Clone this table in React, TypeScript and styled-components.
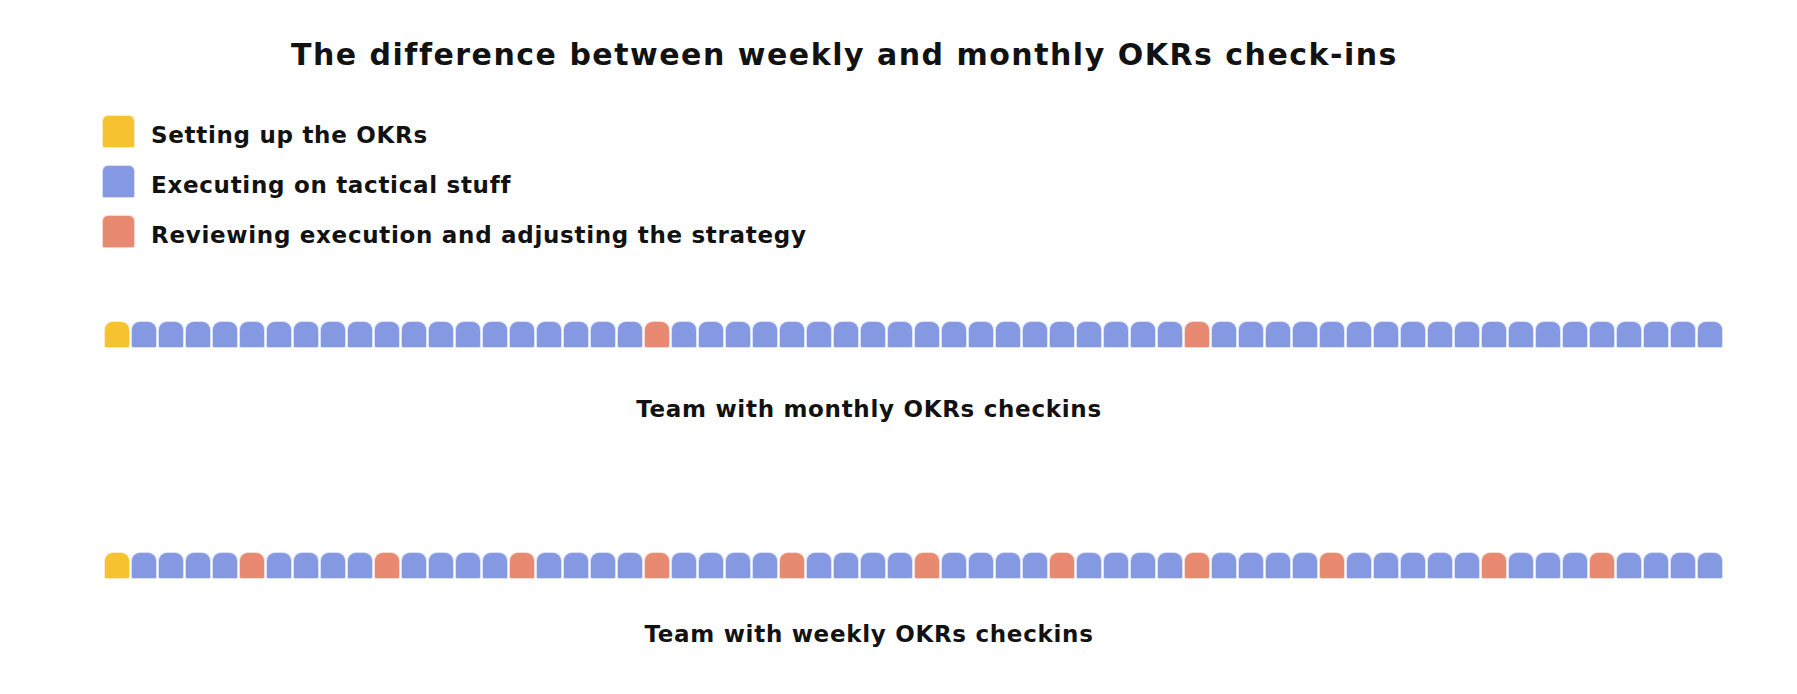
import React from "react";
import styled, { createGlobalStyle } from "styled-components";

const Global = createGlobalStyle`
  html, body { margin: 0; padding: 0; background: #ffffff; }
  body { font-family: "DejaVu Sans", "Liberation Sans", sans-serif; color: #121212; }
`;

type Kind = "setup" | "exec" | "review";

const COLORS: Record<Kind, string> = {
  setup: "#f6c230",
  exec: "#8499e1",
  review: "#e88a71",
};

const Page = styled.div`
  display: flex;
  flex-direction: column;
  align-items: flex-start;
  padding: 37px 0 40px 103px;
  width: 1797px;
  box-sizing: border-box;
`;

const Title = styled.h1`
  margin: 0 0 0 188px;
  font-size: 30px;
  line-height: 36px;
  font-weight: 700;
  letter-spacing: 1.5px;
  white-space: nowrap;
`;

const Legend = styled.div`
  display: flex;
  flex-direction: column;
  gap: 19px;
  margin-top: 43px;
`;

const LegendRow = styled.div`
  display: flex;
  align-items: flex-start;
  gap: 17px;
  height: 31px;
`;

const Swatch = styled.span<{ $kind: Kind }>`
  display: block;
  width: 31px;
  height: 31px;
  border-radius: 5px 5px 1px 1px;
  background: ${(p) => COLORS[p.$kind]};
  box-shadow: 0 0 0 1px ${(p) => COLORS[p.$kind]}55;
`;

const LegendLabel = styled.span`
  font-size: 23px;
  line-height: 31px;
  padding-top: 4px;
  margin-bottom: -4px;
  font-weight: 700;
  letter-spacing: 0.7px;
  white-space: nowrap;
`;

const Chart = styled.section<{ $top: number }>`
  display: flex;
  flex-direction: column;
  align-items: flex-start;
  margin-top: ${(p) => p.$top}px;
  margin-left: 2px;
`;

const Track = styled.div`
  display: flex;
  gap: 3px;
`;

const Block = styled.span<{ $kind: Kind }>`
  display: block;
  width: 24px;
  height: 25px;
  border-radius: 8px 8px 1px 1px;
  background: ${(p) => COLORS[p.$kind]};
  box-shadow: 0 0 0 1px ${(p) => COLORS[p.$kind]}50;
`;

const Caption = styled.div<{ $top: number }>`
  width: 1528px;
  text-align: center;
  margin-top: ${(p) => p.$top}px;
  font-size: 23px;
  line-height: 30px;
  font-weight: 700;
  letter-spacing: 0.7px;
  white-space: nowrap;
`;

const TOTAL = 60;

function buildRow(reviews: number[]): Kind[] {
  return Array.from({ length: TOTAL }, (_, i) =>
    i === 0 ? "setup" : reviews.includes(i) ? "review" : "exec"
  );
}

const monthly = buildRow([20, 40]);
const weekly = buildRow([5, 10, 15, 20, 25, 30, 35, 40, 45, 51, 55]);

const legend: { kind: Kind; label: string }[] = [
  { kind: "setup", label: "Setting up the OKRs" },
  { kind: "exec", label: "Executing on tactical stuff" },
  { kind: "review", label: "Reviewing execution and adjusting the strategy" },
];

export default function App() {
  return (
    <>
      <Global />
      <Page>
        <Title>The difference between weekly and monthly OKRs check-ins</Title>
        <Legend>
          {legend.map((l) => (
            <LegendRow key={l.kind}>
              <Swatch $kind={l.kind} />
              <LegendLabel>{l.label}</LegendLabel>
            </LegendRow>
          ))}
        </Legend>
        <Chart $top={75}>
          <Track>
            {monthly.map((k, i) => (
              <Block key={i} $kind={k} />
            ))}
          </Track>
          <Caption $top={47}>Team with monthly OKRs checkins</Caption>
        </Chart>
        <Chart $top={129}>
          <Track>
            {weekly.map((k, i) => (
              <Block key={i} $kind={k} />
            ))}
          </Track>
          <Caption $top={41}>Team with weekly OKRs checkins</Caption>
        </Chart>
      </Page>
    </>
  );
}
